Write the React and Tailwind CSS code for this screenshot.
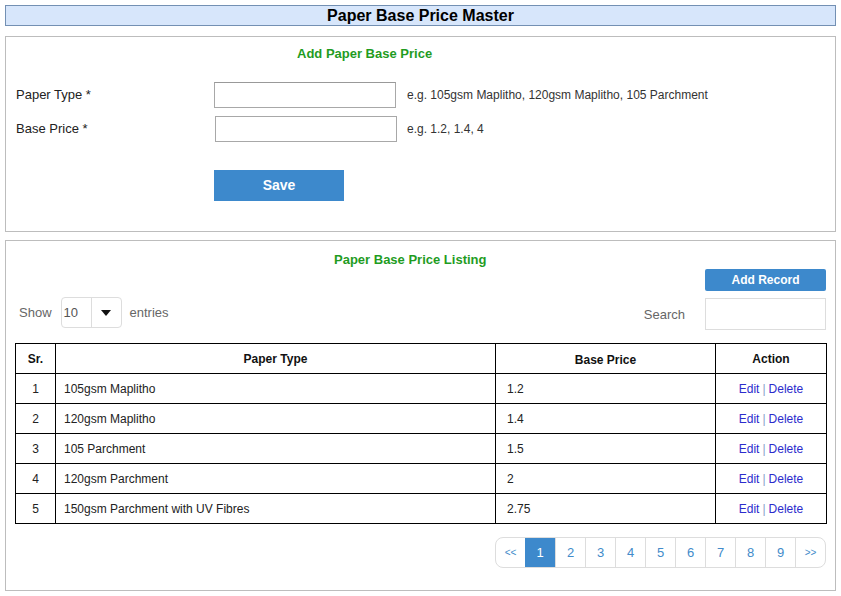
import React from "react";

const rows = [
  ["1", "105gsm Maplitho", "1.2"],
  ["2", "120gsm Maplitho", "1.4"],
  ["3", "105 Parchment", "1.5"],
  ["4", "120gsm Parchment", "2"],
  ["5", "150gsm Parchment with UV Fibres", "2.75"],
];

const cell = "border-r border-b border-black h-[30px] flex items-center";

export default function App() {
  return (
    <div
      className="w-[841px] h-[596px] bg-white pl-[5px] pt-[5px] text-[#222]"
      style={{ fontFamily: '"Liberation Sans", Arial, sans-serif' }}
    >
      {/* Title */}
      <div className="w-[831px] h-[21px] border border-[#7390b3] bg-[#d7e6fb] flex items-center justify-center">
        <span className="text-[16px] font-bold text-black leading-none">Paper Base Price Master</span>
      </div>

      {/* Add panel */}
      <div className="mt-[10px] w-[831px] h-[196px] border border-[#bdbdbd] pt-[8px] pl-[10px]">
        <div className="pl-[281px] h-[17px] leading-[17px] text-[13px] font-bold text-[#1f9c1f]">
          Add Paper Base Price
        </div>
        <div className="mt-[20px] flex items-center h-[26px]">
          <div className="w-[198px] text-[13px] text-[#222]">Paper Type *</div>
          <div className="w-[182px] h-[26px] border border-[#a8a8a8] border-t-[#999] bg-white" />
          <div className="ml-[11px] text-[12px] text-[#333]">e.g. 105gsm Maplitho, 120gsm Maplitho, 105 Parchment</div>
        </div>
        <div className="mt-[8px] flex items-center h-[26px]">
          <div className="w-[198px] text-[13px] text-[#222]">Base Price *</div>
          <div className="ml-[1px] w-[182px] h-[26px] border border-[#a8a8a8] bg-white" />
          <div className="ml-[10px] text-[12px] text-[#333]">e.g. 1.2, 1.4, 4</div>
        </div>
        <div className="mt-[28px] ml-[198px] w-[130px] h-[31px] bg-[#3d89cc] flex items-center justify-center">
          <span className="text-white text-[14px] font-bold">Save</span>
        </div>
      </div>

      {/* Listing panel */}
      <div className="mt-[8px] w-[831px] h-[351px] border border-[#bdbdbd] pt-[10px] px-[9px]">
        <div className="pl-[319px] h-[17px] leading-[17px] text-[13px] font-bold text-[#1f9c1f]">
          Paper Base Price Listing
        </div>
        <div className="mt-[1px] flex justify-end">
          <div className="w-[121px] h-[22px] rounded-[2px] bg-[#3d89cc] flex items-center justify-center text-white text-[12px] font-bold">
            Add Record
          </div>
        </div>
        <div className="mt-[6px] flex justify-between items-start h-[33px]">
          <div className="flex items-center h-[31px] pl-[4px] text-[13px] text-[#666]">
            <span>Show</span>
            <div className="ml-[9px] w-[61px] h-[31px] rounded-[4px] border border-[#ddd] flex items-stretch">
              <div className="w-[30px] border-r border-[#ddd] flex items-center pl-[2px] text-[13px] text-[#555]">10</div>
              <div className="flex-1 flex items-center justify-center">
                <svg width="10" height="6" viewBox="0 0 10 6"><path d="M0 0 L10 0 L5 6 Z" fill="#111" /></svg>
              </div>
            </div>
            <span className="ml-[8px]">entries</span>
          </div>
          <div className="flex items-center text-[13px] text-[#666]">
            <span className="mt-[2px]">Search</span>
            <div className="ml-[20px] mt-[1px] w-[121px] h-[32px] border border-[#ddd] bg-white" />
          </div>
        </div>

        {/* Table */}
        <div className="mt-[13px] w-[812px] border-l border-t border-black text-[12px]">
          <div className="grid grid-cols-[40px_440px_220px_111px] font-bold text-[#111]">
            <div className={cell + " justify-center"}>Sr.</div>
            <div className={cell + " justify-center"}>Paper Type</div>
            <div className={cell + " justify-center pt-[3px]"}>Base Price</div>
            <div className={cell + " justify-center"}>Action</div>
          </div>
          {rows.map((r) => (
            <div key={r[0]} className="grid grid-cols-[40px_440px_220px_111px] text-[#222]">
              <div className={cell + " justify-center"}>{r[0]}</div>
              <div className={cell + " pl-[8px]"}>{r[1]}</div>
              <div className={cell + " pl-[11px]"}>{r[2]}</div>
              <div className={cell + " justify-center"}>
                <span className="text-[#2b2bcc]">Edit</span>
                <span className="text-[#8aa0c8] mx-[3px]">|</span>
                <span className="text-[#2b2bcc]">Delete</span>
              </div>
            </div>
          ))}
        </div>

        {/* Pagination */}
        <div className="mt-[13px] flex justify-end">
          <div className="flex h-[31px] border border-[#ddd] rounded-[8px] overflow-hidden text-[13px] text-[#428bca]">
            <div className="w-[29px] flex items-center justify-center text-[10px]">&lt;&lt;</div>
            <div className="w-[30px] flex items-center justify-center bg-[#3d89cc] text-white">1</div>
            {["2", "3", "4", "5", "6", "7", "8", "9"].map((n) => (
              <div key={n} className="w-[30px] border-l border-[#ddd] flex items-center justify-center">{n}</div>
            ))}
            <div className="w-[30px] border-l border-[#ddd] flex items-center justify-center text-[10px]">&gt;&gt;</div>
          </div>
        </div>
      </div>
    </div>
  );
}
